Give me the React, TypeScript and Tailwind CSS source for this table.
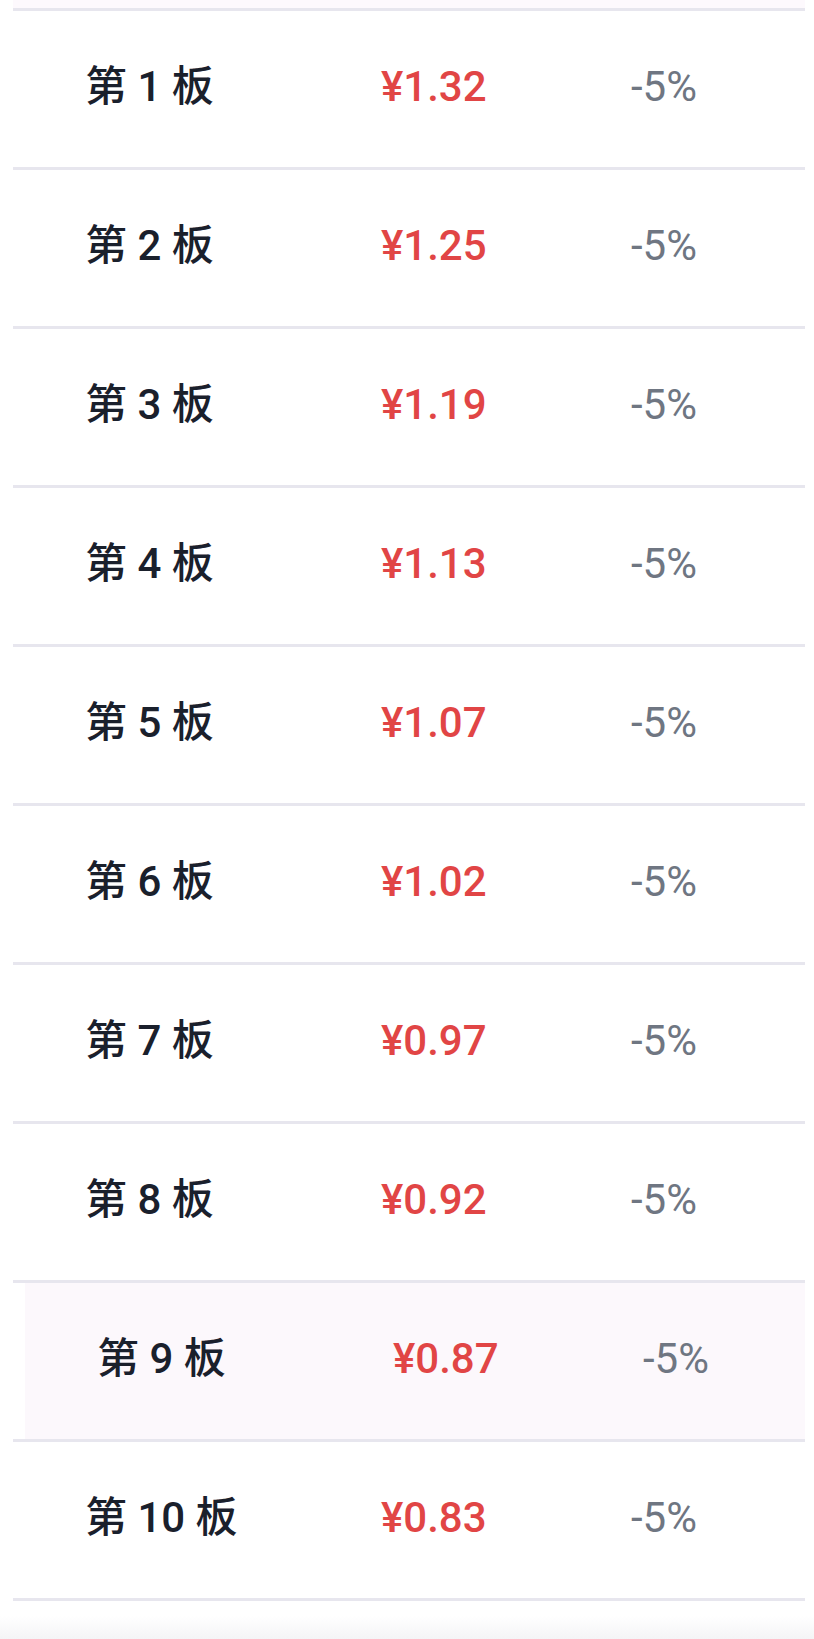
import React from "react";

const rows = [
  { n: 1, price: "¥1.32" },
  { n: 2, price: "¥1.25" },
  { n: 3, price: "¥1.19" },
  { n: 4, price: "¥1.13" },
  { n: 5, price: "¥1.07" },
  { n: 6, price: "¥1.02" },
  { n: 7, price: "¥0.97" },
  { n: 8, price: "¥0.92" },
  { n: 9, price: "¥0.87", active: true },
  { n: 10, price: "¥0.83" },
];

export default function App() {
  return (
    <div
      className="w-[814px] h-[1639px] bg-white overflow-hidden flex flex-col"
      style={{ fontFamily: '"Roboto", "Noto Sans CJK SC", sans-serif' }}
    >
      <div className="ml-[13px] mr-[9px] flex flex-col">
        <div className="h-[8px] bg-[#fdf9fd] border-b-[3px] border-[#e7e6ee] box-content" />
        {rows.map((r) => (
          <div
            key={r.n}
            className="h-[159px] border-b-[3px] border-[#e7e6ee] overflow-hidden flex"
          >
            <div
              className={
                r.active
                  ? "ml-3 w-full shrink-0 flex items-center pl-[72px] pb-[5px] bg-[#fcf8fc]"
                  : "w-full shrink-0 flex items-center pl-[72px] pb-[5px]"
              }
            >
              <div className="w-[296px] text-[42px] leading-none font-medium text-[#1a202c] whitespace-pre">
                {`第 ${r.n} 板`}
              </div>
              <div className="w-[250px] text-[42px] leading-none font-medium text-[#e14545]">
                {r.price}
              </div>
              <div className="text-[42px] leading-none font-normal text-[#6f7682]">
                -5%
              </div>
            </div>
          </div>
        ))}
      </div>
      <div className="flex-1 bg-gradient-to-b from-white from-40% to-[#f4f4f6]" />
    </div>
  );
}
